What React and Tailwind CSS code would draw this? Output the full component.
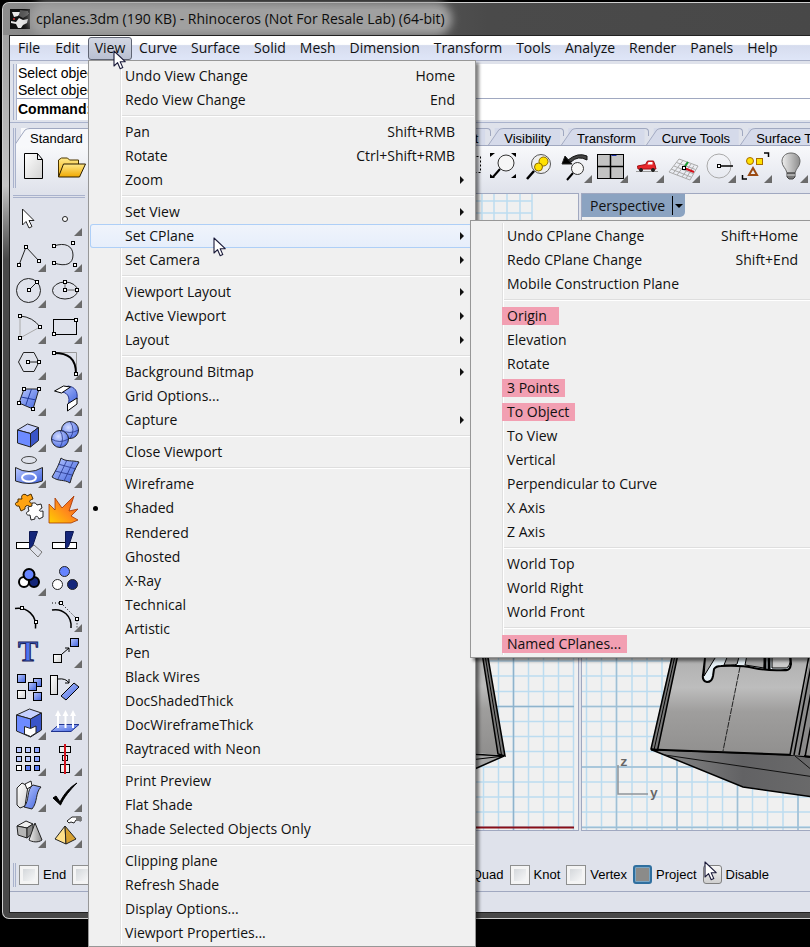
import React from "react";

const UI = "font-['Open_Sans','Noto_Sans',sans-serif]";
const ARIAL = "font-['Liberation_Sans',Arial,sans-serif]";

/* ---------- shared drawing helpers ---------- */

function Cursor({ className = "" }) {
  return (
    <svg aria-hidden="true" width="14" height="21" viewBox="0 0 14 21" className={`pointer-events-none ${className}`}>
      <path d="M1 1v15l3.600-3.300 2.600 6 2.600-1.100-2.600-5.900h5z" fill="#fff" stroke="#1b1b3a" strokeWidth="1.100" strokeLinejoin="round" />
    </svg>
  );
}

function Node({ x, y }) {
  return <rect x={x - 1.5} y={y - 1.5} width="3" height="3" fill="#fff" stroke="#000" strokeWidth="1" />;
}

function Flyout() {
  return <path d="M36 28v8h-8z" fill="#6b6b6b" />;
}

function ToolButton({ label, flyout, children }) {
  return (
    <button type="button" aria-label={label} title={label} className="block size-9 shrink-0">
      <svg width="36" height="36" viewBox="0 0 36 36" fill="none" stroke="#222" strokeWidth="1">
        {children}
        {flyout && <g stroke="none"><Flyout /></g>}
      </svg>
    </button>
  );
}

function Defs() {
  return (
    <svg width="0" height="0" className="absolute" aria-hidden="true">
      <defs>
        <linearGradient id="blue" x1="0" y1="0" x2="1" y2="1">
          <stop offset="0" stopColor="#b9c8ff" /><stop offset="1" stopColor="#3f62dd" />
        </linearGradient>
        <radialGradient id="ball" cx=".4" cy=".35" r=".7">
          <stop offset="0" stopColor="#d5deff" /><stop offset="1" stopColor="#4a6be6" />
        </radialGradient>
        <linearGradient id="paper" x1="0" y1="0" x2="1" y2="1">
          <stop offset="0" stopColor="#ffffff" /><stop offset="1" stopColor="#d2d2d2" />
        </linearGradient>
        <linearGradient id="gold" x1="0" y1="0" x2="0" y2="1">
          <stop offset="0" stopColor="#ffe98a" /><stop offset="1" stopColor="#f0a800" />
        </linearGradient>
        <linearGradient id="fire" x1="0" y1="1" x2="1" y2="0">
          <stop offset="0" stopColor="#ffd000" /><stop offset=".5" stopColor="#ff8a1c" /><stop offset="1" stopColor="#e8501c" />
        </linearGradient>
        <linearGradient id="grey" x1="0" y1="0" x2="1" y2="0">
          <stop offset="0" stopColor="#efefef" /><stop offset="1" stopColor="#8c8c8c" />
        </linearGradient>
        <linearGradient id="shade" x1="0" y1="0" x2="0" y2="1">
          <stop offset="0" stopColor="#a8a8a8" /><stop offset=".4" stopColor="#bdbdbd" /><stop offset=".6" stopColor="#9f9e9d" /><stop offset="1" stopColor="#8f8e8d" />
        </linearGradient>
        <linearGradient id="under" x1="0" y1="0" x2="1" y2="0">
          <stop offset="0" stopColor="#8a8a8a" /><stop offset=".5" stopColor="#626264" /><stop offset="1" stopColor="#6c6c6c" />
        </linearGradient>
      </defs>
    </svg>
  );
}

/* ---------- left tool palette ---------- */

const TOOLS = [
  ["Pointer", false, <path d="M12.500 9v16l3.500-3.500 3 6.500 3-1.500-3-6h5z" fill="#fff" />],
  ["Point", true, <circle cx="19" cy="19" r="2.500" fill="#fff" />],
  ["Polyline", true, <><path d="M9 29L16 11 29 25" /><Node x={9} y={29} /><Node x={16} y={11} /><Node x={29} y={25} /></>],
  ["Control point curve", true, <><path d="M8 10C19 6 27 10 27 19S20 31 8 27" /><Node x={8} y={10} /><Node x={27} y={7} /><Node x={8} y={27} /><Node x={29} y={29} /></>],
  ["Circle", true, <><circle cx="18.500" cy="18.500" r="12" /><path d="M19 18l8-8" /><Node x={19} y={18} /><Node x={27} y={10} /></>],
  ["Ellipse", true, <><ellipse cx="19" cy="18.500" rx="12.500" ry="8.500" /><path d="M19 10v8h12" stroke="#666" /><Node x={19} y={18} /><Node x={19} y={10} /><Node x={31} y={18} /></>],
  ["Arc", true, <><path d="M10 8v22L30 19" stroke="#aaa" /><path d="M10 8q13 1 20 11" /><Node x={10} y={8} /><Node x={30} y={19} /><Node x={10} y={30} /></>],
  ["Rectangle", true, <><rect x="7.500" y="11.500" width="23" height="15" stroke="#000" /><Node x={30} y={12} /><Node x={8} y={26} /></>],
  ["Polygon", true, <><path d="M8.500 18l5-9.500h10.500l5 9.500-5 9.500H13.500z" /><path d="M18 18h11" /><Node x={18} y={18} /><Node x={29} y={18} /></>],
  ["Fillet", true, <><path d="M8 8.500h22.500V30" stroke="#999" /><path d="M8 9c14 0 22 5 22 21" stroke="#000" strokeWidth="2" /><Node x={8} y={9} /><Node x={30} y={30} /></>],
  ["Surface from points", true, <><path d="M14 9h15l-6 20-14-6z" fill="url(#blue)" /><path d="M21.500 9l-6 17M11 17l15 3" stroke="#223a9a" /><Node x={14} y={9} /><Node x={29} y={9} /><Node x={23} y={29} /><Node x={9} y={23} /></>],
  ["Blend surface", true, <><path d="M13 12c8-1 12 5 9 13l9-6c1-8-2-12-9-13z" fill="url(#blue)" stroke="#26368c" /><path d="M8.500 11l9-5 7 1-9 6z" fill="#fff" stroke="#000" /><path d="M21.500 24l9.500-6v6l-9.500 7z" fill="#fff" stroke="#000" /></>],
  ["Box", true, <><path d="M7.500 14l10-6 11 3.500-8 6z" fill="#c5d0ff" /><path d="M7.500 14l13 3.500V31l-13-4z" fill="#6d8bff" /><path d="M20.500 17.500l8-6v13L20.500 31z" fill="#3a55c8" /></>],
  ["Boolean union", true, <><circle cx="24" cy="14" r="8.500" fill="url(#ball)" /><circle cx="14" cy="23" r="8.500" fill="url(#ball)" /><path d="M24 5.500q6 8 0 17M15.500 14q8 5 17 0M14 14.500q5 8 0 17M5.500 23q8 5 17 0" stroke="#26368c" strokeWidth=".8" /></>],
  ["Project curve", true, <><ellipse cx="19" cy="8" rx="7.500" ry="3.500" stroke="#444" /><path d="M5.500 15.500q13.500 8 27 0V29q-13.500 5-27 0z" fill="url(#blue)" /><ellipse cx="19" cy="25.500" rx="7" ry="4" stroke="#fff" strokeWidth="2" /></>],
  ["Patch", true, <><path d="M15 6c5 4 11 2 18 4-4 7-7 13-9 21-6-4-11-1-18-6 4-7 7-12 9-19z" fill="url(#blue)" /><path d="M21 8l-9 19M27 10l-9 19M12 12l18 5M9 19l17 4" stroke="#26368c" strokeWidth=".8" /></>],
  ["Explode puzzle", false, <><path d="M8 11l4 0c-2-5 4-6 5-3l4-2 2 5c-5 1-4 5 0 4l1 4-4 1c0-4-6-3-5 1l-4 2-2-5c-4 1-5-4-1-4z" fill="#ffa311" stroke="#4a2c00" /><path d="M18 19l4-1c-1-4 4-4 5-1l4-1 1 4c-4 2-3 4 1 3l0 6-4 2c-1-4-5-3-4 0l-4 1-1-5c-4 1-5-3-1-4z" fill="#fff" /></>],
  ["Explode", false, <path d="M3 35V16l6 6V10l7 10L28 8l-5 15 9-2-7 7 7 4-7 3z" fill="url(#fire)" stroke="#a33600" strokeWidth=".8" />],
  ["Trim", false, <><rect x="6.500" y="18.500" width="13" height="6" fill="#fff" stroke="#000" /><path d="M19.500 7.500h8l-5 15-3 2z" fill="#14267a" stroke="#0b1650" /><path d="M24 21l8 7-4 5-8-8z" stroke="#777" /></>],
  ["Split", false, <><rect x="6.500" y="18.500" width="24" height="6" fill="#fff" stroke="#000" /><path d="M19.500 7.500h8l-5 15-3 2z" fill="#14267a" stroke="#0b1650" /></>],
  ["Group", true, <><g stroke="#000" strokeWidth="2"><circle cx="14" cy="22" r="5" fill="#fff" /><circle cx="24" cy="22" r="5" fill="#14267a" /><circle cx="19" cy="14.500" r="5.500" fill="#6584ff" /></g></>],
  ["Ungroup", false, <><circle cx="18.500" cy="11.500" r="5" fill="#6584ff" /><circle cx="11.500" cy="24.500" r="5" fill="#fff" /><circle cx="26.500" cy="24.500" r="5" fill="#14267a" /></>],
  ["Edit points", false, <><path d="M5 12.500c12-2 22 7 20.500 20" stroke="#000" strokeWidth="1.500" /><Node x={12} y={12} /><Node x={26} y={26} /></>],
  ["Control points on", true, <><path d="M6 14c11-2 20 6 19 18" stroke="#000" strokeWidth="1.500" /><path d="M6 7h9l16 16v9" stroke="#000" strokeDasharray="1 2" /><Node x={15} y={7} /><Node x={31} y={23} /></>],
  ["Text", false, <text x="18" y="29" textAnchor="middle" fontSize="30" fontWeight="700" fontFamily="Liberation Serif, serif" fill="#4f72ee" stroke="#16225a" strokeWidth="1">T</text>],
  ["Move", true, <><rect x="7.500" y="22.500" width="8" height="8" fill="url(#paper)" stroke="#000" /><rect x="24.500" y="6.500" width="8" height="8" fill="url(#blue)" stroke="#000" /><path d="M16 22l7-6m-4 0h4v4" stroke="#000" /></>],
  ["Copy", false, <g stroke="#000"><rect x="7.500" y="6.500" width="8" height="8" fill="url(#blue)" /><rect x="23.500" y="10.500" width="8" height="8" fill="url(#blue)" /><rect x="18.500" y="14.500" width="8" height="8" fill="url(#blue)" /><rect x="7.500" y="22.500" width="8" height="8" fill="url(#paper)" /><rect x="23.500" y="24.500" width="8" height="8" fill="url(#blue)" /></g>],
  ["Rotate", false, <><rect x="4.500" y="7.500" width="7" height="19" fill="url(#paper)" stroke="#000" /><path d="M28 15l5 4-13 13-5-4z" fill="url(#blue)" stroke="#000" /><path d="M12 11q8-1 11 4m0-4v4h-4" stroke="#000" /></>],
  ["Boolean difference", true, <><path d="M6.500 11l13-6 12 4-11 6z" fill="#c5d0ff" /><path d="M6.500 11l14 4v18l-14-6z" fill="#6d8bff" /><path d="M20.500 15l11-6v17l-11 7z" fill="#3a55c8" /><path d="M14.500 22.500l6 2 5.500-2.500v7l-5.500 3.500-6-2.500z" fill="#fff" /></>],
  ["Extrude", true, <><path d="M5 27.500l8-7h20l-8 7z" fill="url(#blue)" stroke="#1f3390" /><path d="M12 24V9M19.500 24V9M27 24V9" stroke="#fff" strokeWidth="2" /><path d="M9 12l3-6 3 6zM16.500 12l3-6 3 6zM24 12l3-6 3 6z" fill="#fff" stroke="none" /></>],
  ["Array", true, <g stroke="#000">{[7, 16, 25].map((y) => [6, 15, 24].map((x) => <rect key={`${x}-${y}`} x={x + 0.5} y={y + 0.5} width="5" height="5" fill={y === 25 ? (x === 6 ? "#fff" : "#5f7ff5") : x === 24 ? "#8fa6ff" : "#b9c8ff"} />))}</g>],
  ["Align", true, <><g stroke="#000" fill="#eee"><rect x="13.500" y="6.500" width="11" height="6" /><rect x="16.500" y="15.500" width="5" height="5" /><rect x="14.500" y="24.500" width="9" height="8" /></g><path d="M19 4v30" stroke="#d3121c" strokeWidth="2" /></>],
  ["Flow along surface", true, <><path d="M7 12l5-5 6 3-3 20-5 2-3-3z" fill="url(#paper)" /><path d="M15 8l6-3 1 5-5 3z" fill="#fff" /><path d="M14 31c6-7 2-17 9-22l8 2c-6 6-3 15-9 22z" fill="url(#blue)" /></>],
  ["Check", true, <path d="M7 22l3-2 4 6C18 18 24 11 31 7 24 14 18 21 14.500 29z" fill="#000" stroke="#000" />],
  ["Solid primitives", true, <><path d="M7 14l9-5 7 3-6 4z" fill="#eee" /><path d="M7 14l10 2v10L8 23z" fill="#b5b5b5" /><path d="M17 16l6-4v9l-6 5z" fill="#858585" /><path d="M25 11l7 17c-4 3-10 2-13 0z" fill="url(#grey)" /></>],
  ["Render options", true, <><path d="M19 14l-10 13 11 5z" fill="#ffe08a" /><path d="M19 14l11 13-10 5z" fill="#d6a030" /><path d="M21 9l5-4h9v4l-5-1-2 3-3-1-2 1z" fill="#fff" /><path d="M30 4h5v5h-5z" fill="#777" stroke="none" /></>],
];

/* ---------- horizontal toolbar ---------- */

const NEW_OPEN = [
  ["New", false, <path d="M8.500 6.500h13l5 6v19h-18zM21.500 6.500v6h5" fill="url(#paper)" stroke="#000" />],
  ["Open", false, <><path d="M6.500 30V13l3-2h6l2 2h9v4" fill="url(#gold)" stroke="#4a3400" /><path d="M6.500 30l5-13h22l-6 13z" fill="url(#gold)" stroke="#2a1d00" /></>],
];

const HIDDEN_COMMANDS = ["Save", "Print", "Cut", "Copy to clipboard", "Paste", "Undo", "Pan", "Rotate view", "Zoom dynamic", "Zoom out"];

const VIEW_COMMANDS = [
  ["Zoom window", false, <rect x="4.500" y="9.500" width="28" height="16" stroke="#000" strokeDasharray="2 2" />],
  ["Zoom extents", false, <><circle cx="22" cy="16" r="8" fill="#f6f6f6" stroke="#333" /><path d="M16 22L9 30" stroke="#000" strokeWidth="2" /><path d="M6 6h5l-5 4zM32 6h-5l5 4zM6 31h5l-5-4zM32 31h-5l5-4z" fill="#000" stroke="none" /></>],
  ["Zoom selected", false, <><circle cx="21" cy="17" r="9.500" fill="#eee" stroke="#555" /><circle cx="23.500" cy="14.500" r="4.500" fill="#ffe100" stroke="#8a6a00" /><circle cx="18.500" cy="20" r="4" fill="#ffe100" stroke="#8a6a00" /><path d="M14 24l-7 8" stroke="#000" strokeWidth="2.500" /></>],
  ["Undo view change", true, <><circle cx="21.500" cy="21.500" r="6" fill="#f6f6f6" stroke="#333" /><path d="M17 26l-6 7" stroke="#000" strokeWidth="2" /><path d="M12 13q10-8 19-4v4q-9-5-16 2z" fill="#444" stroke="#111" /><path d="M6 17l3-8 7 8z" fill="#000" /></>],
  ["Four viewports", true, <><rect x="5.500" y="7.500" width="26" height="24" fill="#c3c3c3" stroke="#000" /><path d="M18.500 7.500v24M5.500 19.500h26" stroke="#000" strokeWidth="1.500" /><path d="M19.500 8.500h5" stroke="#1a2fa8" /></>],
  ["Car", true, <><path d="M8 24.500h22" stroke="#999" /><path d="M9.500 19l8-1.500 2-3.500h6l1.500 4 1 4H10z" fill="#e8262a" stroke="#a30f12" /><path d="M20.500 15h4v2.500h-5z" fill="#fff" stroke="none" /><circle cx="13" cy="23" r="1.500" fill="#222" /><circle cx="25" cy="23" r="1.500" fill="#222" /></>],
  ["CPlane", true, <><path d="M5 25l10-13 19 7-8 14zM9 26.500L19 13.500M13 28l10-13M18 30l9-13M22 31.500l8-13M7 22l20 8M10 19l20 8M12.500 15.500l19 7" stroke="#aaa" /><path d="M20 21l4-6" stroke="#159a2c" strokeWidth="2" /><path d="M20 21l10 4" stroke="#d3121c" strokeWidth="2" /><Node x={20} y={21} /></>],
  ["Radius", true, <><circle cx="19" cy="19" r="12" stroke="#aaa" /><path d="M19 19h14" stroke="#000" strokeWidth="1.500" /><Node x={19} y={19} /></>],
  ["Named selections", true, <><circle cx="14" cy="14" r="3.500" fill="#ffe100" stroke="#a86b00" /><rect x="20.500" y="11.500" width="6" height="6" fill="#ffe100" stroke="#a86b00" /><path d="M17 21l4 7h-8z" stroke="#9a4a12" strokeWidth="2" /><path d="M28 6h4.500v4M6.500 28v4H11" stroke="#000" strokeWidth="1.500" /></>],
  ["Lights", true, <><path d="M19 6c-6 0-9 4-9 8.500 0 5 4 6.500 5 11.500h8c1-5 5-6.500 5-11.500C28 10 25 6 19 6z" fill="url(#grey)" stroke="#666" /><path d="M15 26h8v4l-2 2h-4l-2-2z" fill="#777" stroke="#444" /><path d="M15 28h8" stroke="#ddd" /></>],
];

/* ---------- menus ---------- */

const CPLANE_MENU = [
  [{ t: "Undo CPlane Change", k: "Shift+Home" }, { t: "Redo CPlane Change", k: "Shift+End" }, { t: "Mobile Construction Plane" }],
  [{ t: "Origin", mark: true }, { t: "Elevation" }, { t: "Rotate" }, { t: "3 Points", mark: true }, { t: "To Object", mark: true }, { t: "To View" }, { t: "Vertical" }, { t: "Perpendicular to Curve" }, { t: "X Axis" }, { t: "Z Axis" }],
  [{ t: "World Top" }, { t: "World Right" }, { t: "World Front" }],
  [{ t: "Named CPlanes...", mark: true }],
];

const VIEW_MENU = [
  [{ t: "Undo View Change", k: "Home" }, { t: "Redo View Change", k: "End" }],
  [{ t: "Pan", k: "Shift+RMB" }, { t: "Rotate", k: "Ctrl+Shift+RMB" }, { t: "Zoom", more: true }],
  [{ t: "Set View", more: true }, { t: "Set CPlane", more: true, open: CPLANE_MENU }, { t: "Set Camera", more: true }],
  [{ t: "Viewport Layout", more: true }, { t: "Active Viewport", more: true }, { t: "Layout", more: true }],
  [{ t: "Background Bitmap", more: true }, { t: "Grid Options..." }, { t: "Capture", more: true }],
  [{ t: "Close Viewport" }],
  [{ t: "Wireframe" }, { t: "Shaded", checked: true }, { t: "Rendered" }, { t: "Ghosted" }, { t: "X-Ray" }, { t: "Technical" }, { t: "Artistic" }, { t: "Pen" }, { t: "Black Wires" }, { t: "DocShadedThick" }, { t: "DocWireframeThick" }, { t: "Raytraced with Neon" }],
  [{ t: "Print Preview" }, { t: "Flat Shade" }, { t: "Shade Selected Objects Only" }],
  [{ t: "Clipping plane" }, { t: "Refresh Shade" }, { t: "Display Options..." }, { t: "Viewport Properties..." }],
];

function MenuItem({ item }) {
  return (
    <li className="relative">
      <button
        type="button"
        className={`relative flex w-full items-center justify-between pr-[19px] pl-[35px] text-left ${item.checked ? "h-[25px]" : "h-6"} ${item.open ? "rounded-[3px] bg-linear-to-b from-[#f0f4fb] to-[#e6eefb] shadow-[inset_0_0_0_1px_#aecff7]" : ""}`}
      >
        {item.checked && <span className="absolute left-[3px] size-[5px] rounded-full bg-black" />}
        {item.mark ? <mark className="-ml-[5px] min-w-[57px] bg-[#f29fb2] pr-[6px] pl-[5px] leading-[18px] text-[#111]">{item.t}</mark> : <span>{item.t}</span>}
        {item.k && <kbd className="font-[inherit]">{item.k}</kbd>}
        {item.more && <span className="absolute right-[10px] border-y-[4px] border-l-[4px] border-y-transparent border-l-[#111]" />}
      </button>
      {item.open && <Menu groups={item.open} className="top-[-4px] left-[380px] w-[349px]" />}
    </li>
  );
}

function Menu({ groups, className }) {
  return (
    <div className={`absolute z-20 border border-[#979797] bg-[#f0f0f0] px-px pt-[3px] pb-px text-sm whitespace-nowrap text-[#111] shadow-[3px_3px_3px_rgba(0,0,0,0.5)] ${UI} ${className}`}>
      <div className="absolute top-[2px] bottom-[2px] left-[31px] w-[2px] border-l border-[#e0e0e0] bg-white" />
      {groups.map((g, i) => (
        <React.Fragment key={i}>
          {i > 0 && <div className="my-[3px] ml-[31px] h-[2px] border-t border-[#dedede] bg-white" />}
          <ul>{g.map((item) => <MenuItem key={item.t} item={item} />)}</ul>
        </React.Fragment>
      ))}
    </div>
  );
}

const MENUS = ["File", "Edit", "View", "Curve", "Surface", "Solid", "Mesh", "Dimension", "Transform", "Tools", "Analyze", "Render", "Panels", "Help"];

const menuButton = (m) => {
  if (m === "View") return "h-[23px] w-11 rounded-[3px] border border-[#5f6473] bg-linear-to-b from-[#d3d7e2] to-[#b9c0d2]";
  if (m === "File" || m === "Edit") return "h-[23px] pr-[8px] pl-[7px]";
  return "h-[23px] px-[7px]";
};

function MenuBar() {
  return (
    <nav className={`flex h-[25px] shrink-0 items-center border-b border-[#a5acc4] bg-linear-to-b from-white from-35% via-[#d6dcee] via-40% to-[#dfe6f8] pl-px text-sm whitespace-nowrap text-[#111] ${UI}`}>
      {MENUS.map((m) => (
        <div key={m} className="relative">
          <button type="button" className={menuButton(m)}>{m}</button>
          {m === "View" && <Menu groups={VIEW_MENU} className="top-[23px] left-0 w-[388px]" />}
        </div>
      ))}
    </nav>
  );
}

/* ---------- tabs ---------- */

const TABS = ["CPlane", "Set View", "Display", "Select", "Viewport Layout", "Visibility", "Transform", "Curve Tools", "Surface Tools", "Solid Tools"];

function Tab({ label, active }) {
  return (
    <button type="button" className={`relative h-[18px] shrink-0 px-[13px] pt-px text-[13px] ${active ? "" : "border-b border-[#a0a8c0]"}`}>
      <svg aria-hidden="true" className="absolute inset-0 h-full w-full overflow-visible" viewBox="0 0 100 18" preserveAspectRatio="none">
        <rect x="5" width="90" height="18" fill={active ? "#f7f8fb" : "#d5daea"} />
      </svg>
      <svg aria-hidden="true" className="absolute top-0 -left-[3px] h-full w-4" viewBox="0 0 16 18">
        <path d="M0 18L11 2q2-1.500 5-1.500V18z" fill={active ? "#f7f8fb" : "#d5daea"} />
        <path d="M0 18L11 2q2-1.500 5-1.500" fill="none" stroke="#a0a8c0" />
      </svg>
      <span className="absolute top-0 right-0 left-3 h-2 rounded-tr-[4px] border-t border-r border-[#a0a8c0]" />
      <span className="relative">{label}</span>
    </button>
  );
}

/* ---------- viewports ---------- */

const range = (a, b, s) => Array.from({ length: Math.ceil((b - a) / s) }, (_, i) => Math.round((a + i * s) * 2) / 2);

function FrontViewport() {
  return (
    <svg aria-label="Front viewport" role="img" className="h-[636px] w-full" viewBox="88 194 490 636" preserveAspectRatio="xMaxYMin slice">
      <g stroke="#bcdcf0" fill="none" strokeWidth="1.500">
        <path d="M482 194v30M494 194v30M507 194v30M520 194v30M532 194v30M470 201h62M470 213h62" />
        {range(468.5, 574, 15).map((x) => <path key={x} d={`M${x} 640V830`} />)}
        {range(646, 830, 15.1).map((y) => <path key={y} d={`M470 ${y}H574`} />)}
      </g>
      <path d="M470 706.500H574M513.500 640V830" stroke="#8fb3cc" fill="none" strokeWidth="1.500" />
      <path d="M470 827.500H574" stroke="#8a0f18" strokeWidth="2" />
      <path d="M470 640h12l22 115-34-2z" fill="url(#shade)" />
      <path d="M470 754l34 2-34 15z" fill="#a5a5a5" stroke="#000" strokeWidth="1.500" />
      <path d="M470 760l34-4" stroke="#000" />
      <path d="M480 640h5l20 116-7-2z" fill="#777" stroke="#000" strokeWidth="1.500" />
      <path d="M482.500 640l19 115" stroke="#000" />
    </svg>
  );
}

function PerspectiveViewport() {
  return (
    <svg aria-label="Perspective viewport" role="img" className="h-[636px] w-full" viewBox="582 194 228 636" preserveAspectRatio="xMinYMin slice">
      <g stroke="#bcdcf0" fill="none" strokeWidth="1.500">
        {range(586.5, 1600, 15.1).map((x) => <path key={x} d={`M${x} 640V830`} />)}
        {range(646, 830, 15.1).map((y) => <path key={y} d={`M582 ${y}H1600`} />)}
      </g>
      <path d="M582 706.500H1600M582 767H1600M582 827.500H1600M616.500 640V830M677 640V830M737.500 640V830M798 640V830" stroke="#9fbfd4" fill="none" strokeWidth="1.500" />
      <path d="M651 749.500l144 5.500 40 5v40l-92-13z" fill="url(#under)" stroke="#000" strokeWidth="1.500" />
      <path d="M665 755l170 25M795 756l30 25" stroke="#111" />
      <path d="M675 640l-24 109.500 144 5.500 40 4V640z" fill="url(#shade)" />
      <path d="M676 640l-25 109 6.500 1.500L681 640z" fill="#777" stroke="#000" strokeWidth="1.500" />
      <path d="M678.500 640L654 750" stroke="#000" />
      <path d="M651 749.500l144 5.500 40 5" stroke="#000" strokeWidth="2" fill="none" />
      <path d="M740 667l-17 84" stroke="#222" strokeDasharray="6 1" />
      <path d="M814 640l-24 115 14 1 24-116z" fill="#8a8a8a" />
      <path d="M812 640l-22 115M816 640l-22 115M821 640l-22 115M827 640l-22 117" stroke="#000" strokeWidth="1.500" fill="none" />
      <path d="M706 650l-3 25q-1 6 4 7 5 0 6-6l1-7q2-3 7-3 21-1 33 2 14 3 31 2 5 1 6-6l-1-14z" fill="#e6f0f6" stroke="#000" strokeWidth="2" />
      <path d="M706 650l-2 26 16-26zM730 650l-6 15q14 0 13-1l4-14zM748 650l-3 15 19 3 2-18z" fill="#a5a5a5" stroke="#000" />
      <path d="M765 650v19M769 650v19" stroke="#000" strokeWidth="3" />
      <path d="M772 650h17l1 12q-1 7-6 6h-12z" fill="#c9c9c9" stroke="#000" />
      <path d="M618 765v29h30" stroke="#8f9499" strokeWidth="1.500" fill="none" />
      <text x="620" y="766" fontSize="13" fontFamily="Liberation Mono, monospace" fontWeight="700" fill="#666">z</text>
      <text x="650" y="797" fontSize="13" fontFamily="Liberation Mono, monospace" fontWeight="700" fill="#666">y</text>
    </svg>
  );
}

/* ---------- snap bar ---------- */

const SNAPS = ["End", "Near", "Point", "Mid", "Cen", "Int", "Perp", "Tan", "Quad", "Knot", "Vertex", "Project", "Disable"];

function SnapBar() {
  return (
    <div className={`flex h-[34px] items-center gap-[3px] overflow-hidden border-b border-[#a0a8c0] pl-[3px] text-[13px] whitespace-nowrap ${ARIAL}`}>
      <span className="h-6 w-[3px] shrink-0 border-x border-[#a9b2cc]" />
      <div className="flex gap-[6px]">
        {SNAPS.map((s) => (
          <label key={s} className="flex shrink-0 items-center gap-[4px]">
            <input
              type="checkbox"
              defaultChecked={s === "Project"}
              className={
                s === "Project"
                  ? "size-[19px] appearance-none rounded-[3px] border-2 border-[#2f6f9f] bg-[#8b8b89] shadow-[inset_0_0_0_1px_#78a5c4]"
                  : s === "Disable"
                    ? "size-[19px] appearance-none rounded-[3px] border border-[#808080] bg-linear-to-b from-[#f4f4f4] to-[#cfcfcf]"
                    : "size-5 appearance-none border border-[#8e8f8f] bg-linear-to-br from-[#ccd0d4] to-white shadow-[inset_0_0_0_3px_#f4f4f4]"
              }
            />
            {s}
          </label>
        ))}
      </div>
    </div>
  );
}

/* ---------- application window ---------- */

export default function App() {
  return (
    <div className="relative flex min-h-screen w-full flex-col overflow-hidden bg-black pt-[2px] pl-[2px] text-black">
      <Defs />
      <main className="flex flex-col rounded-l-[7px] border-y border-l border-[#d0d0d0] bg-linear-to-b from-[#9b9b9b] from-0% via-[#c4c4c4] via-20% to-[#484848] to-28% pb-[5px] pl-[6px]">
        <header className="-ml-[6px] flex h-8 shrink-0 items-center rounded-tl-[6px] bg-linear-to-r from-[#8c8c8c] via-[#4a4a4a] via-60% to-[#484848] pl-[7px]">
          <svg width="20" height="20" viewBox="0 0 20 20" aria-hidden="true" className="shrink-0">
            <rect width="20" height="20" fill="#111" />
            <path d="M2 3h9l-3 4-4 1zM1 12l5 1 3-4 4 2 5-1-1 4-4 2-2 3H8l-2-4-5-1zM14 3l5 1-3 2z" fill="#e8e8e8" />
            <path d="M10 1l8 1v4l-5 3-4-2z" fill="#555" />
            <circle cx="4" cy="10" r="1" fill="#c33" />
          </svg>
          <h1 className={`ml-[6px] rounded-full bg-[#a0a0a0] text-sm whitespace-nowrap text-[#0c0c0c] shadow-[0_0_8px_7px_#a0a0a0] ${UI}`}>
            cplanes.3dm (190 KB) - Rhinoceros (Not For Resale Lab) (64-bit)
          </h1>
        </header>

        <div className="flex flex-col border-y border-l border-[#222] bg-[#dfe2eb]">
          <MenuBar />

          <section aria-label="Command history" className={`flex h-[62px] border-b border-[#a9b2cc] pt-[3px] pl-[3px] text-sm whitespace-nowrap ${ARIAL}`}>
            <span className="mb-[2px] w-1 border-x border-[#a9b2cc]" />
            <div className="mb-[2px] flex-1 bg-white">
              <div className="h-[35px] border-b border-[#a0a8c0] pt-px pl-px leading-[17px]">
                <p>Select objects to move</p>
                <p>Select objects to move. Press Enter when done</p>
              </div>
              <label className="flex h-[19px] items-center pl-px font-bold">
                Command:
                <input aria-label="Command" className="ml-1 flex-1 font-normal outline-none" />
              </label>
            </div>
          </section>

          <section className="flex h-[70px] pt-[5px] pl-[3px]">
            <span className="mb-[5px] w-[3px] shrink-0 border-x border-[#a9b2cc]" />
            <div className="min-w-0 flex-1">
              <div className={`flex overflow-hidden pl-px whitespace-nowrap ${ARIAL}`}>
                <Tab label="Standard" active />
                {TABS.map((t) => <Tab key={t} label={t} />)}
              </div>
              <div className="flex h-[47px] overflow-hidden bg-linear-to-b from-[#f8f9fb] to-[#dfe2eb] pt-px">
                {[...NEW_OPEN, ...HIDDEN_COMMANDS.map((c) => [c, true, null]), ...VIEW_COMMANDS].map(([label, fly, art]) => (
                  <ToolButton key={label} label={label} flyout={fly}>{art}</ToolButton>
                ))}
              </div>
            </div>
          </section>

          <section className="flex h-[665px]">
            <aside aria-label="Main tools" className="w-[78px] shrink-0">
              <div className="mx-[3px] my-[2px] h-[3px] border-y border-[#a9b2cc]" />
              <div className="grid w-[72px] grid-cols-2">
                {TOOLS.map(([label, fly, art]) => (
                  <ToolButton key={label} label={label} flyout={fly}>{art}</ToolButton>
                ))}
              </div>
            </aside>
            <div className="flex h-[638px] min-w-0 flex-1 gap-[2px]">
              <div className="w-[491px] shrink-0 border-y border-r border-[#a0a8c0] bg-[#f0f0f0]"><FrontViewport /></div>
              <div className="relative min-w-0 flex-1 border-y border-l border-[#a0a8c0] bg-[#f0f0f0]">
                <PerspectiveViewport />
                <button type="button" className={`absolute top-0 left-0 flex h-[23px] w-[103px] items-center rounded-br-[5px] bg-[#8ba3c1] pl-[8px] text-sm text-[#111] ${UI}`}>
                  Perspective
                  <span className="ml-auto h-[19px] w-px bg-black" />
                  <span className="mr-[2px] ml-[2px] border-x-[4px] border-t-[4px] border-x-transparent border-t-black" />
                </button>
              </div>
            </div>
          </section>

          <div className="relative">
            <SnapBar />
            <Cursor className="absolute top-[3px] left-[694px]" />
          </div>
          <footer className="h-5" />
        </div>
      </main>
      <Cursor className="absolute top-[50px] left-[113px] z-40" />
      <Cursor className="absolute top-[237px] left-[213px] z-40" />
    </div>
  );
}
